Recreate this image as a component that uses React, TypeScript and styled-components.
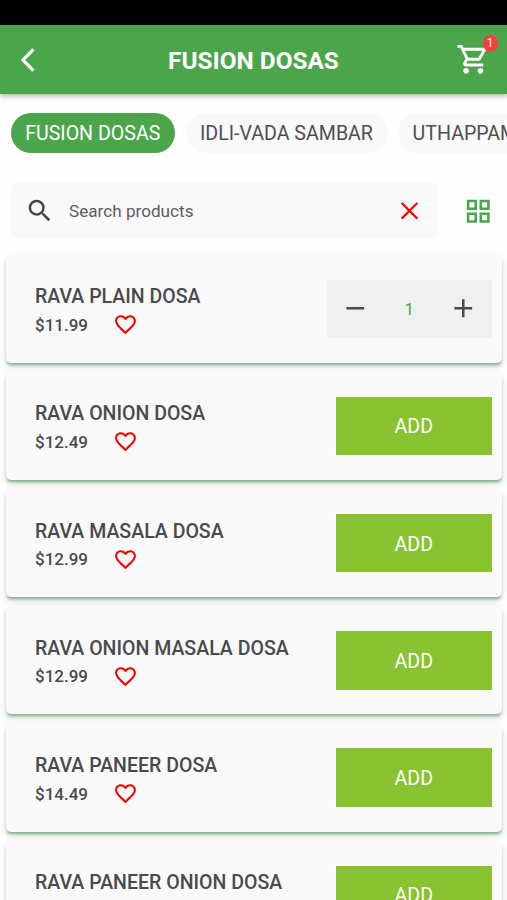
import React from "react";
import styled, { createGlobalStyle } from "styled-components";

const GlobalStyle = createGlobalStyle`
  * { box-sizing: border-box; }
  body {
    margin: 0;
    background: #fefefe;
    font-family: Roboto, "Liberation Sans", sans-serif;
    color: #4a4a4a;
    overflow: hidden;
  }
  button { font-family: inherit; border: 0; padding: 0; margin: 0; background: none; cursor: pointer; }
`;

const Screen = styled.div`
  width: 507px;
  height: 900px;
  overflow: hidden;
  display: flex;
  flex-direction: column;
`;

const StatusBar = styled.div`
  height: 25px;
  flex: none;
  background: #000;
`;

const Header = styled.header`
  height: 69px;
  flex: none;
  display: grid;
  grid-template-columns: 56px 1fr 56px;
  align-items: center;
  background: #4ba64b;
  box-shadow: 0 2px 5px rgba(0, 0, 0, 0.32);
`;

const BackButton = styled.button`
  display: flex;
  height: 69px;
  align-items: center;
  padding-left: 20px;
`;

const Title = styled.h1`
  margin: 0;
  padding-top: 2px;
  text-align: center;
  color: #fff;
  font-size: 24.4px;
  line-height: 28px;
  font-weight: 700;
  white-space: nowrap;
`;

const CartButton = styled.button`
  position: relative;
  display: flex;
  width: 35px;
  height: 35px;
  margin-left: 4.5px;
`;

const Badge = styled.span`
  position: absolute;
  left: 27px;
  top: -7px;
  width: 15px;
  height: 16.5px;
  border-radius: 50%;
  background: #f4403c;
  color: #fff;
  font-size: 12px;
  line-height: 16px;
  text-align: center;
`;

const Chips = styled.nav`
  display: flex;
  flex: none;
  gap: 10.5px;
  margin-top: 19px;
  padding-left: 10.5px;
`;

const Chip = styled.button<{ $active?: boolean; $width: number }>`
  flex: none;
  width: ${(p) => p.$width}px;
  height: 39.5px;
  padding-top: 1px;
  border-radius: 20px;
  background: ${(p) => (p.$active ? "#4ba64b" : "#f9f9f9")};
  color: ${(p) => (p.$active ? "#fff" : "#4f4f4f")};
  font-size: 19.6px;
  line-height: 39px;
  white-space: nowrap;
`;

const SearchRow = styled.div`
  display: flex;
  flex: none;
  align-items: center;
  margin-top: 29.5px;
  padding-left: 11px;
`;

const SearchField = styled.div`
  display: flex;
  align-items: center;
  width: 427.5px;
  height: 57px;
  padding: 0 20px 0 14px;
  border-radius: 9px;
  background: #f9f9f9;
`;

const Placeholder = styled.span`
  flex: 1;
  margin-left: 14.5px;
  color: #5c5c5c;
  font-size: 17.15px;
  line-height: 24px;
`;

const GridToggle = styled.button`
  display: flex;
  margin-left: 24px;
  padding-top: 1px;
`;

const List = styled.ul`
  list-style: none;
  margin: 15.5px 0 0;
  padding: 0 5px 0 6px;
  display: flex;
  flex-direction: column;
  gap: 9.3px;
`;

const Card = styled.li`
  flex: none;
  height: 108px;
  display: flex;
  align-items: center;
  justify-content: space-between;
  padding: 0 10px 0 29px;
  border-radius: 5px;
  background: #f9f9f9;
  box-shadow: 0 3px 3px -1px rgba(20, 90, 30, 0.42), 0 4px 7px rgba(20, 90, 30, 0.17);
`;

const Details = styled.div`
  display: flex;
  flex-direction: column;
  padding-top: 6px;
`;

const Name = styled.span`
  font-size: 19.55px;
  line-height: 26px;
  font-weight: 500;
  white-space: nowrap;
`;

const PriceLine = styled.div`
  display: flex;
  align-items: center;
  height: 29px;
`;

const Price = styled.span`
  width: 78px;
  font-size: 17px;
  line-height: 24px;
  font-weight: 500;
`;

const AddButton = styled.button`
  width: 156.5px;
  height: 58.5px;
  padding-top: 2px;
  background: #8ac332;
  color: #fff;
  font-size: 19.6px;
`;

const Stepper = styled.div`
  width: 165.5px;
  height: 58px;
  display: grid;
  grid-template-columns: 57px 1fr 57px;
  align-items: center;
  justify-items: center;
  background: #f0f0f0;
`;

const StepButton = styled.button`
  display: flex;
`;

const Quantity = styled.span`
  color: #4ba64b;
  font-size: 17px;
`;

type IconProps = { size: number; color: string; path: string };

const Icon = ({ size, color, path }: IconProps) => (
  <svg width={size} height={size} viewBox="0 0 24 24" fill={color}>
    <path d={path} />
  </svg>
);

const icons = {
  cart: "M15.55 13c.75 0 1.41-.41 1.75-1.03l3.58-6.49A.996.996 0 0 0 20.01 4H5.21l-.94-2H1v2h2l3.6 7.59-1.35 2.44C4.52 15.37 5.48 17 7 17h12v-2H7l1.1-2h7.45zM6.16 6h12.15l-2.76 5H8.53L6.16 6zM7 18c-1.1 0-1.99.9-1.99 2S5.9 22 7 22s2-.9 2-2-.9-2-2-2zm10 0c-1.1 0-1.99.9-1.99 2s.89 2 1.99 2 2-.9 2-2-.9-2-2-2z",
  search: "M15.5 14h-.79l-.28-.27A6.471 6.471 0 0 0 16 9.5 6.5 6.5 0 1 0 9.5 16c1.61 0 3.09-.59 4.23-1.57l.27.28v.79l5 4.99L20.49 19l-4.99-5zm-6 0C7.01 14 5 11.99 5 9.5S7.01 5 9.5 5 14 7.01 14 9.5 11.99 14 9.5 14z",
  grid: "M3 3v8h8V3H3zm6 6H5V5h4v4zm-6 4v8h8v-8H3zm6 6H5v-4h4v4zm4-16v8h8V3h-8zm6 6h-4V5h4v4zm-6 4v8h8v-8h-8zm6 6h-4v-4h4v4z",
  heart: "M16.5 3c-1.74 0-3.41.81-4.5 2.09C10.91 3.81 9.24 3 7.5 3 4.42 3 2 5.42 2 8.5c0 3.78 3.4 6.86 8.55 11.54L12 21.35l1.45-1.32C18.6 15.36 22 12.28 22 8.5 22 5.42 19.58 3 16.5 3zm-4.4 15.55l-.1.1-.1-.1C7.14 14.24 4 11.39 4 8.5 4 6.5 5.5 5 7.5 5c1.54 0 3.04.99 3.57 2.36h1.87C13.46 5.99 14.96 5 16.5 5c2 0 3.5 1.5 3.5 3.5 0 2.89-3.14 5.74-7.9 10.05z",
  minus: "M19 13H5v-2h14v2z",
  plus: "M19 13h-6v6h-2v-6H5v-2h6V5h2v6h6v2z",
};

const categories = [
  { label: "FUSION DOSAS", width: 164.5 },
  { label: "IDLI-VADA SAMBAR", width: 202 },
  { label: "UTHAPPAMS", width: 145.5 },
];

const products = [
  { name: "RAVA PLAIN DOSA", price: "$11.99", quantity: 1 },
  { name: "RAVA ONION DOSA", price: "$12.49", quantity: 0 },
  { name: "RAVA MASALA DOSA", price: "$12.99", quantity: 0 },
  { name: "RAVA ONION MASALA DOSA", price: "$12.99", quantity: 0 },
  { name: "RAVA PANEER DOSA", price: "$14.49", quantity: 0 },
  { name: "RAVA PANEER ONION DOSA", price: "$14.99", quantity: 0 },
];

export default function App() {
  return (
    <Screen>
      <GlobalStyle />
      <StatusBar />
      <Header>
        <BackButton aria-label="Back">
          <svg width="16" height="26" viewBox="0 0 16 26" fill="none" stroke="#fff" strokeWidth="3.2">
            <path d="M13.4 2.3 L3 13 L13.4 23.7" />
          </svg>
        </BackButton>
        <Title>FUSION DOSAS</Title>
        <CartButton aria-label="Cart">
          <Icon size={34.5} color="#fff" path={icons.cart} />
          <Badge>1</Badge>
        </CartButton>
      </Header>
      <Chips>
        {categories.map((c, i) => (
          <Chip key={c.label} $active={i === 0} $width={c.width}>
            {c.label}
          </Chip>
        ))}
      </Chips>
      <SearchRow>
        <SearchField>
          <Icon size={29.5} color="#444" path={icons.search} />
          <Placeholder>Search products</Placeholder>
          <svg width="19" height="19" viewBox="0 0 19 19" stroke="#f00505" strokeWidth="2.2">
            <path d="M1.7 2 L17.3 17.6 M17.3 2 L1.7 17.6" />
          </svg>
        </SearchField>
        <GridToggle aria-label="Grid view">
          <Icon size={30.5} color="#4ba64b" path={icons.grid} />
        </GridToggle>
      </SearchRow>
      <List>
        {products.map((p) => (
          <Card key={p.name}>
            <Details>
              <Name>{p.name}</Name>
              <PriceLine>
                <Price>{p.price}</Price>
                <Icon size={25} color="#f00505" path={icons.heart} />
              </PriceLine>
            </Details>
            {p.quantity > 0 ? (
              <Stepper>
                <StepButton aria-label="Decrease">
                  <Icon size={30.5} color="#4a4a4a" path={icons.minus} />
                </StepButton>
                <Quantity>{p.quantity}</Quantity>
                <StepButton aria-label="Increase">
                  <Icon size={30.5} color="#4a4a4a" path={icons.plus} />
                </StepButton>
              </Stepper>
            ) : (
              <AddButton>ADD</AddButton>
            )}
          </Card>
        ))}
      </List>
    </Screen>
  );
}
